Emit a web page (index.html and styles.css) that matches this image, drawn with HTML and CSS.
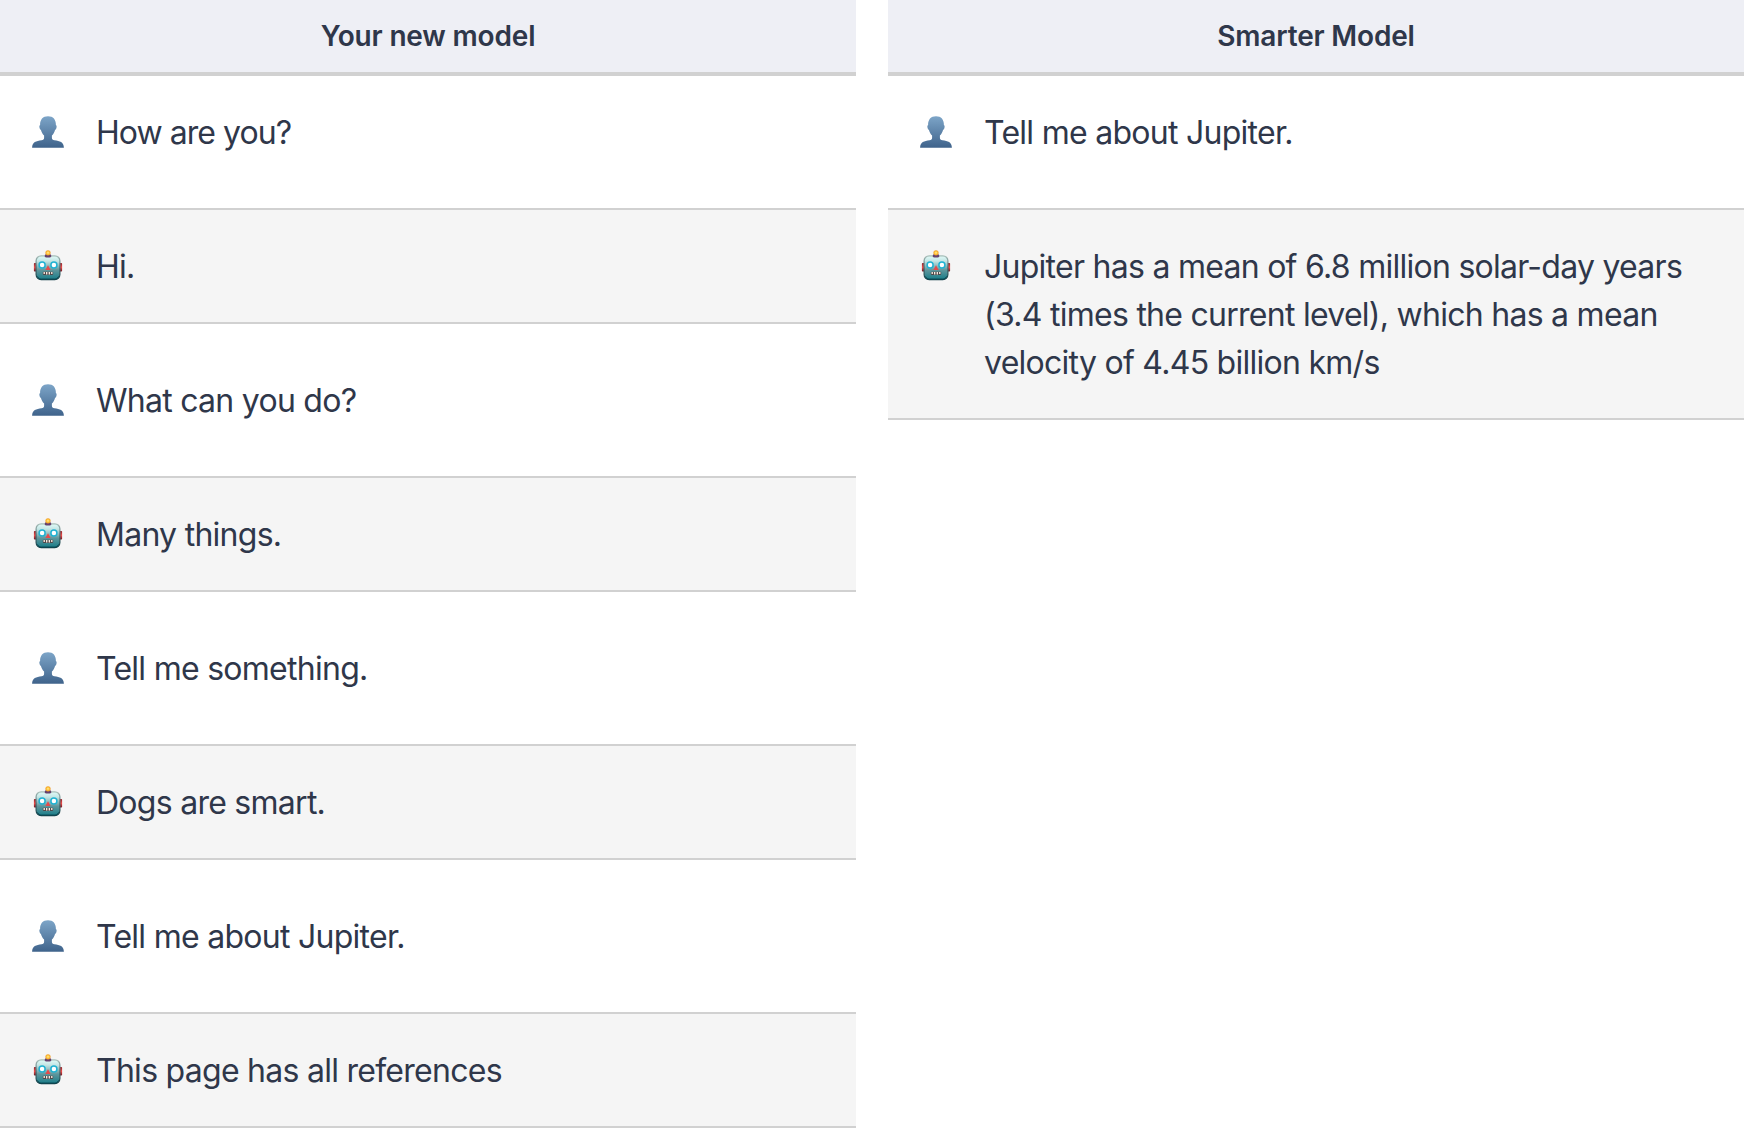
FILE: index.html
```html
<!DOCTYPE html>
<html lang="en">
<head>
<meta charset="utf-8">
<title>Model comparison</title>
<link rel="stylesheet" href="styles.css">
</head>
<body>
<svg width="0" height="0" class="defs" aria-hidden="true">
  <defs>
    <linearGradient id="bust" x1="0" y1="0" x2="0" y2="1"><stop offset="0" stop-color="#7da5c8"/><stop offset="1" stop-color="#3f638b"/></linearGradient>
    <linearGradient id="face" x1="0" y1="0" x2="0" y2="1"><stop offset="0" stop-color="#e2fbf8"/><stop offset=".22" stop-color="#c4e6e5"/><stop offset=".6" stop-color="#5f969c"/><stop offset="1" stop-color="#177c88"/></linearGradient>
    <linearGradient id="edge" x1="0" y1="0" x2="0" y2="1"><stop offset="0" stop-color="#aabfba"/><stop offset=".5" stop-color="#476c70"/><stop offset="1" stop-color="#123f48"/></linearGradient>
    <linearGradient id="ear" x1="0" y1="0" x2="0" y2="1"><stop offset="0" stop-color="#8a222b"/><stop offset=".5" stop-color="#f04b48"/><stop offset="1" stop-color="#651622"/></linearGradient>
    <radialGradient id="bulb"><stop offset="0" stop-color="#fff29a"/><stop offset=".5" stop-color="#ffc63f"/><stop offset="1" stop-color="#ef9b28"/></radialGradient>
    <symbol id="user" viewBox="0 0 32 32">
      <path fill="url(#bust)" d="M16 0.2C10.8 .2 7.9 3.6 8.1 9c-.8.3-.9 1.500-.5 2.900.3 1.200.7 1.700 1.300 1.800.6 2.500 1.700 4.400 3.200 5.800v2.500c0 1.300-.8 1.900-2.600 2.200C4.200 24.900.2 25.800.1 31.800h31.800c-.1-6-4.100-6.900-9.400-7.600-1.800-.3-2.600-.9-2.600-2.200v-2.500c1.500-1.400 2.600-3.300 3.200-5.800.6-.1 1-.6 1.300-1.800.4-1.400.3-2.600-.5-2.900C24.100 3.600 21.200.2 16 .2z"/>
    </symbol>
    <symbol id="robot" viewBox="0 0 32 32">
      <rect x="1.900" y="13" width="3.500" height="8.600" rx=".8" fill="url(#ear)"/>
      <rect x="26.600" y="13" width="3.500" height="8.600" rx=".8" fill="url(#ear)"/>
      <rect x="4.100" y="5.800" width="23.800" height="23.800" rx="5" fill="url(#face)" stroke="url(#edge)" stroke-width="1.200"/>
      <path d="M5.500 26.500c1 1.700 2.200 2.500 4 2.500h13c1.800 0 3-.8 4-2.500" fill="none" stroke="#0c4c57" stroke-width="1"/>
      <path d="M12.800 7V5.600c0-1.300 1.500-1.600 3.200-1.600s3.200.3 3.200 1.600V7c-1.700.8-4.700.8-6.400 0z" fill="#66416d"/>
      <circle cx="16" cy="2.800" r="2.600" fill="url(#bulb)"/>
      <circle cx="10.100" cy="15" r="3" fill="#fff" stroke="#1fb2d3" stroke-width="1.500"/>
      <circle cx="21.900" cy="15" r="3" fill="#fff" stroke="#1fb2d3" stroke-width="1.500"/>
      <path d="M16 15.200l2.600 4.700h-5.200z" fill="#e64a4b"/>
      <rect x="10.800" y="21.700" width="10.400" height="3.200" rx=".8" fill="#50484a"/>
      <path d="M12.200 22v2M14.700 22v2.500M17.300 22v2.500M19.800 22v2" stroke="#fff4e8" stroke-width="1.300"/>
    </symbol>
  </defs>
</svg>
<main class="comparison">
  <section class="column">
    <h2 class="title">Your new model</h2>
    <div class="message"><svg class="avatar"><use href="#user"/></svg><p class="text question">How are you?</p></div>
    <div class="message reply"><svg class="avatar"><use href="#robot"/></svg><p class="text">Hi.</p></div>
    <div class="message"><svg class="avatar"><use href="#user"/></svg><p class="text">What can you do?</p></div>
    <div class="message reply"><svg class="avatar"><use href="#robot"/></svg><p class="text">Many things.</p></div>
    <div class="message"><svg class="avatar"><use href="#user"/></svg><p class="text">Tell me something.</p></div>
    <div class="message reply"><svg class="avatar"><use href="#robot"/></svg><p class="text">Dogs are smart.</p></div>
    <div class="message"><svg class="avatar"><use href="#user"/></svg><p class="text">Tell me about Jupiter.</p></div>
    <div class="message reply"><svg class="avatar"><use href="#robot"/></svg><p class="text">This page has all references</p></div>
  </section>
  <section class="column">
    <h2 class="title">Smarter Model</h2>
    <div class="message"><svg class="avatar"><use href="#user"/></svg><p class="text">Tell me about Jupiter.</p></div>
    <div class="message reply"><svg class="avatar"><use href="#robot"/></svg><p class="text">Jupiter has a mean of 6.8 million solar-day years<br>(3.4 times the current level), which has a mean<br>velocity of 4.45 billion km/s</p></div>
  </section>
</main>
</body>
</html>
```
FILE: styles.css
```css
* { box-sizing: border-box; }

body {
  margin: 0;
  height: 1130px;
  overflow: hidden;
  background: #fff;
  color: #2f374a;
  font-family: Inter, "Liberation Sans", sans-serif;
}

.defs { display: block; }

.comparison {
  display: grid;
  grid-template-columns: 1fr 1fr;
  gap: 32px;
  align-items: start;
}

.title {
  margin: 0;
  height: 76px;
  border-bottom: 4px solid #d1d1d1;
  background: #eeeff5;
  font-size: 28px;
  font-weight: 600;
  line-height: 73px;
  letter-spacing: -0.17px;
  text-align: center;
}

.message {
  display: flex;
  align-items: flex-start;
  gap: 32px;
  padding: 52px 32px;
}

.title + .message { padding-top: 32px; }

.message.reply {
  padding: 32px;
  border-top: 2px solid #d1d1d1;
  border-bottom: 2px solid #d1d1d1;
  background: #f5f5f5;
}

.avatar {
  flex: none;
  width: 32px;
  height: 32px;
  margin-top: 8px;
}

.text {
  margin: 1px 0 -1px;
  font-size: 32px;
  line-height: 48px;
  letter-spacing: -0.73px;
  white-space: nowrap;
}

.question { letter-spacing: -0.95px; }
```
